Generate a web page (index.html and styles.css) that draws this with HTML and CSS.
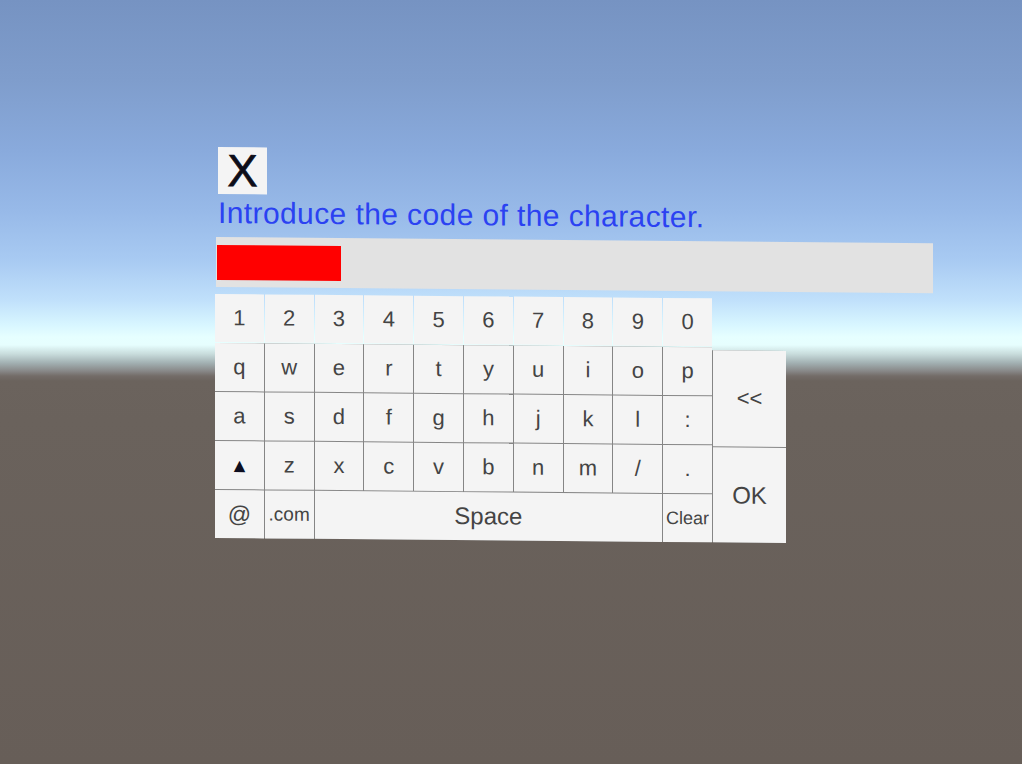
FILE: index.html
```html
<!DOCTYPE html>
<html lang="en">
<head>
<meta charset="utf-8">
<title>Keyboard</title>
<link rel="stylesheet" href="styles.css">
</head>
<body>
<div class="scene">
  <div class="panel">
    <button class="close">X</button>
    <div class="title">Introduce the code of the character.</div>
    <div class="input-bar"><div class="input-value"></div></div>
    <div class="keyboard">
      <div class="row-digits">
        <div class="key">1</div><div class="key">2</div><div class="key">3</div><div class="key">4</div><div class="key">5</div>
        <div class="key">6</div><div class="key">7</div><div class="key">8</div><div class="key">9</div><div class="key">0</div>
      </div>
      <div class="lower">
        <div class="grid">
          <div class="key">q</div><div class="key">w</div><div class="key">e</div><div class="key">r</div><div class="key">t</div>
          <div class="key">y</div><div class="key">u</div><div class="key">i</div><div class="key">o</div><div class="key">p</div>
          <div class="key">a</div><div class="key">s</div><div class="key">d</div><div class="key">f</div><div class="key">g</div>
          <div class="key">h</div><div class="key">j</div><div class="key">k</div><div class="key">l</div><div class="key">:</div>
          <div class="key shift">▲</div><div class="key">z</div><div class="key">x</div><div class="key">c</div><div class="key">v</div>
          <div class="key">b</div><div class="key">n</div><div class="key">m</div><div class="key">/</div><div class="key">.</div>
          <div class="key at">@</div><div class="key dotcom">.com</div><div class="key space">Space</div><div class="key clear">Clear</div>
        </div>
        <div class="side">
          <div class="key back">&lt;&lt;</div>
          <div class="key ok">OK</div>
        </div>
      </div>
    </div>
  </div>
</div>
</body>
</html>
```
FILE: styles.css
```css
html, body {
  margin: 0;
  padding: 0;
}
body {
  width: 1022px;
  height: 764px;
  overflow: hidden;
  font-family: "Liberation Sans", Arial, sans-serif;
  background: linear-gradient(to bottom,
    #7693c2 0px,
    #7f9dcc 80px,
    #89aadc 150px,
    #97b9e8 210px,
    #a8caf2 260px,
    #c0e0fb 300px,
    #d8f6ff 325px,
    #e6ffff 337px,
    #e6fefe 345px,
    #c8dcdc 354px,
    #a2b0b2 363px,
    #888888 371px,
    #736c68 376px,
    #6b635d 381px,
    #6a625c 420px,
    #675e58 764px);
}
.scene {
  padding: 147px 0 0 215px;
}
.panel {
  width: 720px;
  transform-origin: left top;
  transform: skewY(0.5deg);
}
.close {
  display: flex;
  align-items: center;
  justify-content: center;
  width: 49px;
  height: 47px;
  margin: 0 0 0 3px;
  padding: 0;
  border: none;
  background: #f4f4f4;
  color: #0d0d18;
  font-family: "Liberation Sans", Arial, sans-serif;
  font-size: 45px;
  line-height: 47px;
  -webkit-text-stroke: 0.8px #0d0d18;
}
.title {
  margin: 4px 0 0 3px;
  font-size: 30px;
  line-height: 30px;
  letter-spacing: 0.4px;
  color: #2b42f2;
  white-space: nowrap;
}
.input-bar {
  width: 716px;
  height: 35px;
  margin: 9px 0 0 1px;
  padding: 8px 0 7px 1px;
  background: #e2e2e2;
}
.input-value {
  width: 124px;
  height: 35px;
  background: #ff0000;
}
.keyboard {
  margin-top: 7px;
  width: 572px;
}
.key {
  display: flex;
  align-items: center;
  justify-content: center;
  background: #f4f4f4;
  color: #444444;
  font-size: 22px;
  height: 48px;
}
.row-digits {
  display: flex;
  gap: 1px;
  width: 497px;
}
.row-digits .key {
  flex: 1;
}
.lower {
  display: flex;
  margin-top: 1px;
}
.grid {
  display: grid;
  grid-template-columns: repeat(10, 1fr);
  grid-auto-rows: 48px;
  gap: 1px;
  width: 497px;
  background: #858585;
}
.space {
  grid-column: span 7;
  font-size: 24px;
}
.shift {
  font-family: "DejaVu Sans", sans-serif;
  font-size: 15px;
  color: #0d0d20;
}
.at {
  font-size: 23px;
}
.dotcom {
  font-size: 19px;
}
.clear {
  font-size: 18px;
}
.side {
  display: flex;
  flex-direction: column;
  gap: 1px;
  width: 73px;
  margin-top: 3px;
  padding-left: 1px;
  background: #858585;
}
.side .key {
  width: 73px;
}
.back {
  height: 96px;
  font-size: 22px;
}
.ok {
  height: 95px;
  font-size: 24px;
}
```
